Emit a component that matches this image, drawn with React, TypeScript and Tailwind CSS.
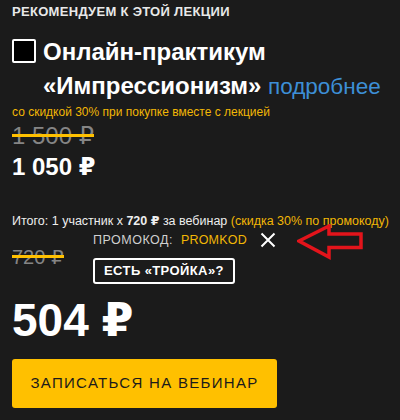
const body = { fontFamily: '"Liberation Sans", Arial, "DejaVu Sans", sans-serif' };

function Strike({ children }: { children: React.ReactNode }) {
  return (
    <span className="relative inline-block leading-none after:absolute after:left-0 after:right-0 after:top-[calc(0.5em-2px)] after:h-[3px] after:bg-[#ffc000]">
      {children}
    </span>
  );
}

function CloseIcon() {
  return (
    <svg width="16" height="16" viewBox="0 0 16 16">
      <path d="M1.5 1.5 L14.5 14.5 M14.5 1.5 L1.5 14.5" stroke="#ffffff" strokeWidth="2" />
    </svg>
  );
}

function RedArrow() {
  return (
    <svg width="68" height="36" viewBox="0 0 68 36" className="absolute left-[37px] top-[-8px]">
      <path
        d="M2 17 L32 2 L32 10 L64 10 L64 23.5 L32 23.5 L32 33 Z"
        fill="none"
        stroke="#e3141b"
        strokeWidth="3.5"
      />
    </svg>
  );
}

export default function App() {
  return (
    <div className="min-h-[420px] w-[400px] bg-[#1b1b1b] px-3 pt-[4px] text-white" style={body}>
      <div className="text-[13px] font-bold uppercase leading-4 tracking-[0.3px] text-[#e8e8e8]">
        Рекомендуем к этой лекции
      </div>

      <div className="mt-[15px] flex items-start gap-[7px]">
        <div className="mt-[4px] h-6 w-6 shrink-0 rounded-[2px] border-2 border-white bg-black" />
        <div className="text-[24px] font-bold leading-[34px]">
          Онлайн-практикум
          <br />
          «Импрессионизм» <span className="text-[22.5px] font-normal text-[#3d8fd6]">подробнее</span>
        </div>
      </div>

      <div className="text-[12px] leading-4 text-[#f2b705]">со скидкой 30% при покупке вместе с лекцией</div>

      <div className="mt-[2px] text-[24px] leading-7 text-[#858585]">
        <Strike>1 500 ₽</Strike>
      </div>
      <div className="mt-[3px] text-[24px] font-bold leading-7">1 050 ₽</div>

      <div className="mt-[32px] whitespace-nowrap text-[12.5px] leading-4 text-[#eeeeee]">
        Итого: 1 участник x <b>720 ₽</b> за вебинар{' '}
        <span className="text-[#f2b705]">(скидка 30% по промокоду)</span>
      </div>

      <div className="mt-[1px] flex items-center">
        <div className="w-[81px] text-[20px] leading-6 text-[#858585]">
          <Strike>720 ₽</Strike>
        </div>
        <div className="flex flex-col items-start gap-[8px]">
          <div className="flex h-5 items-center text-[12.5px] uppercase">
            <span className="tracking-[0.5px] text-[#d0d0d0]">Промокод:</span>
            <span className="ml-[8px] tracking-[0.2px] text-[#f2b705]">PROMKOD</span>
            <div className="relative ml-[13px] flex items-center">
              <CloseIcon />
              <RedArrow />
            </div>
          </div>
          <button className="h-[26px] rounded-[3px] border-2 border-white px-[9px] text-[13px] font-bold uppercase leading-4 tracking-[0.4px] text-white">
            Есть «Тройка»?
          </button>
        </div>
      </div>

      <div className="mt-[13px] text-[46px] font-bold leading-[46px]">504 ₽</div>

      <button className="mt-[16px] flex h-[49px] w-[265px] items-center justify-center rounded-[3px] bg-[#ffc000] text-[15px] uppercase tracking-[1.3px] text-[#1b1b1b]">
        Записаться на вебинар
      </button>
    </div>
  );
}
